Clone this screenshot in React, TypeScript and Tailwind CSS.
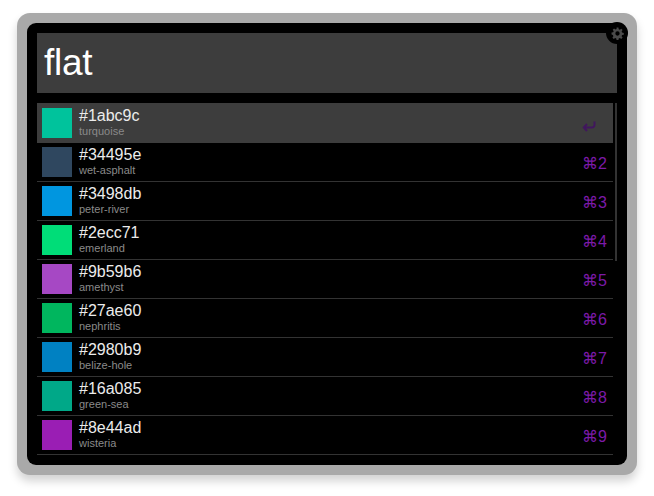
import React from "react";

// swatch colours as they show on screen (the screenshot is colour-managed, so they read more vivid than the hex labels)
const colors = [
  { hex: "#1abc9c", name: "turquoise", shown: "#00c39c" },
  { hex: "#34495e", name: "wet-asphalt", shown: "#2f475f" },
  { hex: "#3498db", name: "peter-river", shown: "#0096e0" },
  { hex: "#2ecc71", name: "emerland", shown: "#00dd78" },
  { hex: "#9b59b6", name: "amethyst", shown: "#a648c4" },
  { hex: "#27ae60", name: "nephritis", shown: "#00b65e" },
  { hex: "#2980b9", name: "belize-hole", shown: "#0081c2" },
  { hex: "#16a085", name: "green-sea", shown: "#00a888" },
  { hex: "#8e44ad", name: "wisteria", shown: "#9a1eb4" },
];

const Gear = () => (
  <svg width="13" height="13" viewBox="0 0 24 24" fill="#4a4a4a">
    <path d="M10.3 1h3.4l.6 3.1a8 8 0 0 1 2 .9l2.7-1.8 2.4 2.4-1.8 2.7a8 8 0 0 1 .9 2l3.1.6v3.4l-3.1.6a8 8 0 0 1-.9 2l1.8 2.7-2.4 2.4-2.7-1.8a8 8 0 0 1-2 .9l-.6 3.1h-3.4l-.6-3.1a8 8 0 0 1-2-.9l-2.7 1.8-2.4-2.4 1.8-2.7a8 8 0 0 1-.9-2L1 13.7v-3.4l3.1-.6a8 8 0 0 1 .9-2L3.2 5 5.6 2.6l2.7 1.8a8 8 0 0 1 2-.9zM12 8a4 4 0 1 0 0 8 4 4 0 0 0 0-8z" />
  </svg>
);

const EnterArrow = () => (
  <svg width="15" height="11" viewBox="0 0 15 11" fill="none" stroke="#41165e" strokeWidth="2">
    <path d="M12.5 0.5v3.5a2.5 2.5 0 0 1-2.5 2.5H2" />
    <path d="M5 3L1.8 6.5 5 10" />
  </svg>
);

const App = () => {
  return (
    <div className="w-[654px] h-[496px] bg-white pt-[13px] pl-[17px] font-['Liberation_Sans',Arial,sans-serif]">
      <div className="w-[620px] h-[462px] rounded-[13px] bg-[#a9a9a9] p-[10px] shadow-[0_6px_10px_rgba(0,0,0,0.18)]">
        <div className="relative w-[600px] h-[442px] rounded-[9px] bg-black pt-[10px] px-[10px]">
          <div className="h-[60px] bg-[#3d3d3d] flex items-center pl-[7px] pb-[2px]">
            <span className="text-[37px] leading-none text-white tracking-[-0.3px]">flat</span>
          </div>
          <div className="absolute top-[-1px] right-[-1px] w-[22px] h-[22px] rounded-full bg-black flex items-center justify-center">
            <Gear />
          </div>
          <div className="relative mt-[10px] pr-[4px]">
            {colors.map((c, i) => (
              <div
                key={c.hex}
                className={
                  i === 0
                    ? "h-[40px] flex items-start bg-[#3d3d3d] pl-[5px] pt-[5px] pr-[6px]"
                    : "h-[39px] flex items-start border-b border-[#333] pl-[5px] pt-[4px] pr-[6px]"
                }
              >
                <div className="w-[30px] h-[30px] shrink-0" style={{ backgroundColor: c.shown }} />
                <div className="ml-[7px] flex flex-col">
                  <span className="text-[16px] leading-[18px] text-[#ececec] mt-[-1px]">{c.hex}</span>
                  <span className="text-[11px] leading-[13px] text-[#8a8a8a]">{c.name}</span>
                </div>
                <div className="ml-auto self-center text-[16px] leading-none">
                  {i === 0 ? (
                    <span className="flex pr-[10px] pt-[1px]">
                      <EnterArrow />
                    </span>
                  ) : (
                    <span className="text-[#7c1aa8]">⌘{i + 1}</span>
                  )}
                </div>
              </div>
            ))}
            <div className="absolute right-[0px] top-0 w-[2px] h-[158px] bg-[#333]" />
          </div>
        </div>
      </div>
    </div>
  );
};

export default App;
